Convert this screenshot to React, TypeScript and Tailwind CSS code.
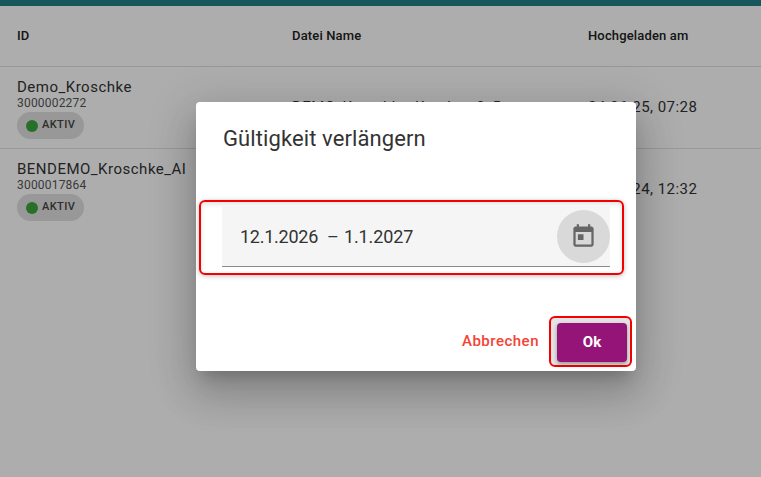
const rows = [
  { id: "Demo_Kroschke", nr: "3000002272", file: "DEMO_Kroschke_Kuraken 3_5.txt", date: "24.06.25, 07:28" },
  { id: "BENDEMO_Kroschke_AI", nr: "3000017864", file: "BENDEMO_Kroschke_4.txt", date: "12.03.24, 12:32" },
];

function TodayIcon() {
  return (
    <svg width="27" height="27" viewBox="0 0 24 24" fill="#666666">
      <path d="M19 3h-1V1h-2v2H8V1H6v2H5c-1.11 0-1.99.9-1.99 2L3 19c0 1.1.89 2 2 2h14c1.1 0 2-.9 2-2V5c0-1.1-.9-2-2-2zm0 16H5V8h14v11zM7 10h5v5H7z" />
    </svg>
  );
}

function Row({ row }: { row: (typeof rows)[number] }) {
  return (
    <div className="grid h-[82px] grid-cols-[275px_296px_1fr] border-b border-[#e0e0e0] pl-[17px] pt-[11px] last:border-b-0">
      <div>
        <p className="text-[15px] leading-[18px] tracking-[0.5px] text-[#333333]">{row.id}</p>
        <p className="text-xs leading-[14px] tracking-[0.2px] text-[#555555]">{row.nr}</p>
        <span className="mt-[2px] inline-flex h-[27px] w-[67px] items-center rounded-full bg-[#e0e0e0] pl-[9px]">
          <span className="h-[12px] w-[12px] rounded-full bg-[#3aa53f]" />
          <span className="ml-[4px] text-[11px] font-medium tracking-[0.4px] text-[#444444]">AKTIV</span>
        </span>
      </div>
      <p className="mt-[19px] text-[15px] leading-5 tracking-[0.4px] text-[#333333]">{row.file}</p>
      <p className="mt-[19px] text-[15px] leading-5 tracking-[0.45px] text-[#333333]">{row.date}</p>
    </div>
  );
}

export default function App() {
  return (
    <div className="relative h-[477px] w-[761px] overflow-hidden bg-white font-['Roboto',sans-serif]">
      <div className="h-[6px] bg-[#227f85]" />
      <div className="grid h-[61px] grid-cols-[275px_296px_1fr] items-center border-b border-[#e0e0e0] pl-[17px] text-[13px] font-medium tracking-[0.15px] text-[#212121]">
        <span>ID</span>
        <span>Datei Name</span>
        <span>Hochgeladen am</span>
      </div>
      <div>
        {rows.map((row) => (
          <Row key={row.nr} row={row} />
        ))}
      </div>

      {/* modal backdrop and dialog */}
      <div className="absolute inset-0 flex items-start justify-center bg-black/[0.32] pl-[71px] pt-[102px]">
        <div className="h-[269px] w-[440px] rounded-[4px] bg-white shadow-[0_11px_15px_-7px_rgba(0,0,0,0.2),0_24px_38px_3px_rgba(0,0,0,0.14),0_9px_46px_8px_rgba(0,0,0,0.12)]">
          <h2 className="pl-[27px] pt-[22px] text-[22px] font-normal leading-[30px] tracking-[0.1px] text-[#333333]">
            Gültigkeit verlängern
          </h2>
          <div className="ml-[3px] mt-[46px] h-[75px] w-[425px] rounded-[6px] border-2 border-[#f50000] pl-[21px] pt-[4px] shadow-[0_1px_5px_rgba(0,0,0,0.25),inset_0_2px_5px_rgba(0,0,0,0.12)]">
            <div className="flex h-[61px] w-[388px] items-center justify-between border-b border-[#8a8a8a] bg-[#f5f5f5] pl-[18px]">
              <span className="whitespace-pre text-[18px] text-[#333333]">
                <span className="tracking-[-0.25px]">12.1.2026</span>
                <span className="ml-[9px]">–</span>
                <span className="ml-[5px] tracking-[-0.1px]">1.1.2027</span>
              </span>
              <span className="flex h-[53px] w-[53px] items-center justify-center rounded-full bg-[#d9d9d9]">
                <TodayIcon />
              </span>
            </div>
          </div>
          <div className="mt-[41px] flex items-center justify-end pr-[4px]">
            <span className="mr-[10px] text-[15px] font-medium tracking-[0.5px] text-[#f44336]">Abbrechen</span>
            <div className="flex h-[51px] w-[83px] items-center rounded-[6px] border-2 border-[#f50000] bg-[#e4e4e4] pl-[6px]">
              <button className="mt-[1px] h-[39px] w-[70px] rounded-[4px] bg-[#951478] text-[15px] font-bold text-white shadow-[0_2px_4px_rgba(0,0,0,0.35)]">
                Ok
              </button>
            </div>
          </div>
        </div>
      </div>
    </div>
  );
}
